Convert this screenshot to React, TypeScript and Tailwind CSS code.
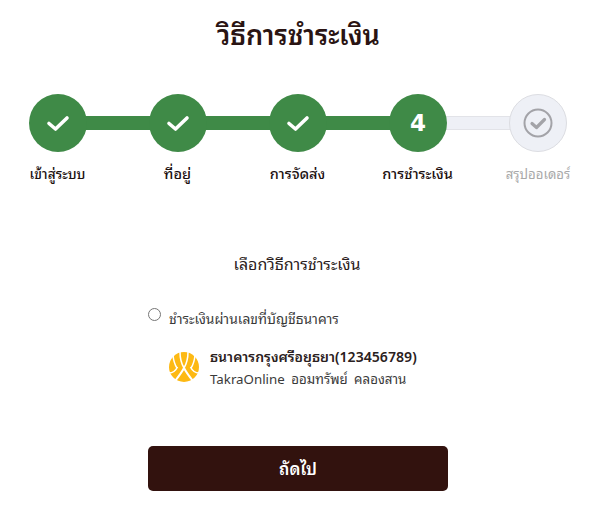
const thai = "font-['Noto_Sans_Thai_Looped','Noto_Sans','Noto_Sans_CJK_SC','DejaVu_Sans',sans-serif]";

function Check({ c = "white" }: { c?: string }) {
  return (
    <svg width="24" height="18" viewBox="0 0 24 18" fill="none">
      <path d="M3 9.5 L9.5 15 L21 4" stroke={c} strokeWidth="3.6" strokeLinecap="round" strokeLinejoin="round" />
    </svg>
  );
}

function Circle({ children, off }: { children: React.ReactNode; off?: boolean }) {
  return (
    <div className={off ? "relative z-10 w-[58px] h-[58px] rounded-full bg-[#eef0f6] border border-[#dcdde2] flex items-center justify-center" : "relative z-10 w-[58px] h-[58px] rounded-full bg-[#3f8a47] flex items-center justify-center"}>
      {children}
    </div>
  );
}

function Bar({ off }: { off?: boolean }) {
  return <div className={off ? "h-[14px] flex-1 -mx-px bg-[#eef0f6] border-y border-[#e2e3e8]" : "h-[14px] flex-1 -mx-px bg-[#3f8a47]"} />;
}

function Logo() {
  return (
    <svg width="30" height="30" viewBox="0 0 30 30">
      <circle cx="15" cy="15" r="15" fill="#fdb913" />
      <g fill="none" stroke="#fff" strokeLinecap="butt">
        <path d="M11 0 C11 6 12 11 15 16 C18 11 19 6 19 0" strokeWidth="1.5" />
        <path d="M4 3 C4.5 9 6 13 8 16" strokeWidth="1.5" />
        <path d="M26 3 C25.5 9 24 13 22 16" strokeWidth="1.5" />
        <path d="M15 16 C13 20 10 24 6 29" strokeWidth="2" />
        <path d="M15 16 C17 20 20 24 24 29" strokeWidth="2" />
        <path d="M0 21 C4 21 6.5 19 8.5 15" strokeWidth="1.6" />
        <path d="M30 21 C26 21 23.5 19 21.5 15" strokeWidth="1.6" />
      </g>
    </svg>
  );
}

export default function App() {
  const labels = ["เข้าสู่ระบบ", "ที่อยู่", "การจัดส่ง", "การชำระเงิน", "สรุปออเดอร์"];
  return (
    <div className={`w-[602px] h-[513px] bg-white overflow-hidden ${thai}`}>
      <h1 className="pt-[13px] pr-[5px] text-center text-[27px] leading-[40px] font-semibold text-[#2a1413]">วิธีการชำระเงิน</h1>

      <div className="mt-[41px] ml-[29px] w-[538px] flex items-center">
        <Circle><Check /></Circle><Bar />
        <Circle><Check /></Circle><Bar />
        <Circle><Check /></Circle><Bar />
        <Circle><span className="text-white text-[23px] font-bold leading-none font-['DejaVu_Sans',sans-serif]">4</span></Circle><Bar off />
        <Circle off>
          <svg width="32" height="32" viewBox="0 0 32 32" fill="none">
            <circle cx="16" cy="16" r="13.5" stroke="#a3a3a8" strokeWidth="2" />
            <path d="M10 16.5 L14.5 20.5 L22.5 12.5" stroke="#a3a3a8" strokeWidth="3.2" strokeLinecap="round" strokeLinejoin="round" />
          </svg>
        </Circle>
      </div>

      <div className="mt-[10px] grid grid-cols-[115px_125px_115px_125px_1fr] text-[14.5px] leading-[22px] font-medium text-center text-[#1c1010]">
        {labels.map((l, i) => (
          <div key={l} className={i === 4 ? "text-[#a8a8a8] text-[13.2px] font-normal pr-[6px]" : i === 0 ? "text-[13.6px]" : ""}>{l}</div>
        ))}
      </div>

      <div className="mt-[67px] pr-[8px] text-center text-[16px] leading-[24px] font-normal text-[#2a2020]">เลือกวิธีการชำระเงิน</div>

      <div className="mt-[32px] ml-[148px] w-[300px]">
        <div className="flex items-center gap-[8px]">
          <div className="w-[13px] h-[13px] rounded-full border border-[#767676] bg-white -mt-[7px]" />
          <div className="text-[13.8px] leading-[22px] text-[#3a3a3a]">ชำระเงินผ่านเลขที่บัญชีธนาคาร</div>
        </div>
        <div className="mt-[16px] ml-[21px] flex items-center gap-[11px]">
          <Logo />
          <div>
            <div className="text-[14px] leading-[21px] font-semibold text-[#2a2020]">ธนาคารกรุงศรีอยุธยา(123456789)</div>
            <div className="mt-[2px] text-[13.3px] leading-[21px] text-[#3a3a3a] [word-spacing:3px]">TakraOnline ออมทรัพย์ คลองสาน</div>
          </div>
        </div>
        <button className="mt-[57px] w-[300px] h-[45px] rounded-[5px] bg-[#32120e] text-white text-[16.5px] font-semibold">ถัดไป</button>
      </div>
    </div>
  );
}
